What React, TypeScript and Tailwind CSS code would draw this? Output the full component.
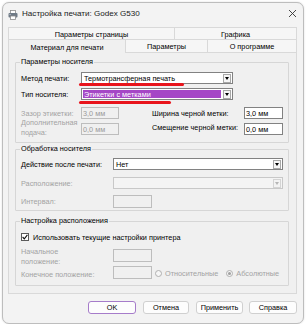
import React from "react";

const GRAY = "text-[#a3a3a3]";

function Arrow({ disabled }: { disabled?: boolean }) {
  return (
    <div className="w-[10px] flex items-center justify-center">
      <div
        className={`w-[8px] h-[9px] border flex items-center justify-center ${
          disabled ? "border-[#d4d4d4] bg-[#f3f3f3]" : "border-[#a8a8a8] bg-[#f6f6f6]"
        }`}
      >
        <div
          className={`w-0 h-0 border-l-[2.5px] border-r-[2.5px] border-t-[3px] border-l-transparent border-r-transparent ${
            disabled ? "border-t-[#b5b5b5]" : "border-t-black"
          }`}
        />
      </div>
    </div>
  );
}

function Combo({
  w,
  text,
  purple,
  disabled,
  red,
}: {
  w: string;
  text?: string;
  purple?: boolean;
  disabled?: boolean;
  red?: string;
}) {
  return (
    <div
      className={`relative h-[12px] flex items-stretch border ${w} ${
        disabled ? "border-[#c8c8c8] bg-[#f4f4f4]" : "border-[#828282] bg-white"
      }`}
    >
      <div className="flex-1 flex items-stretch p-[1px]">
        {purple ? (
          <div className="flex-1 bg-[#a547c6] text-white flex items-center pl-[1px]">{text}</div>
        ) : (
          <div className="flex-1 flex items-center pl-[1px]">{text}</div>
        )}
      </div>
      <Arrow disabled={disabled} />
      {red && <div className={`absolute left-[-3px] h-[2.5px] rounded-full bg-[#e8141c] ${red}`} />}
    </div>
  );
}

function TextBox({
  w,
  h,
  value,
  disabled,
}: {
  w: string;
  h: string;
  value?: string;
  disabled?: boolean;
}) {
  return (
    <div
      className={`${w} ${h} border flex items-center pl-[1px] ${
        disabled ? "border-[#bdbdbd] bg-[#f0f0f0] text-[#9a9a9a]" : "border-[#828282] bg-white text-black"
      }`}
    >
      {value}
    </div>
  );
}

function GroupBox({
  title,
  className,
  children,
}: {
  title: string;
  className: string;
  children: React.ReactNode;
}) {
  return (
    <div className={`relative w-[274px] border border-[#d6d6d6] rounded-[1px] ${className}`}>
      <div className="absolute left-[4px] top-[-6px] px-[1px] leading-[10px] bg-[#f0f0f0] text-black">
        {title}
      </div>
      {children}
    </div>
  );
}

function Radio({ checked }: { checked?: boolean }) {
  return (
    <div className="w-[7px] h-[7px] rounded-full border border-[#b0b0b0] bg-[#f6f6f6] flex items-center justify-center">
      {checked && <div className="w-[3px] h-[3px] rounded-full bg-[#a0a0a0]" />}
    </div>
  );
}

function Btn({ w, label, primary }: { w: string; label: string; primary?: boolean }) {
  return (
    <div
      className={`${w} h-[13px] rounded-[3px] flex items-center justify-center bg-[#fdfdfd] ${
        primary ? "border-[1.5px] border-[#a67cca]" : "border border-[#d0d0d0]"
      }`}
    >
      {label}
    </div>
  );
}

export default function App() {
  return (
    <div className="w-[307px] h-[324px] bg-white pt-[2px] pl-[2px] overflow-hidden font-['Liberation_Sans',Arial,sans-serif] text-[7.3px] leading-[9px] text-black">
      <div className="w-[302px] h-[322px] border border-[#bdbdbd] rounded-[7px] bg-[#f3f3f3] flex flex-col overflow-hidden shadow-[0_0_2px_rgba(0,0,0,0.15)]">
        {/* Title bar */}
        <div className="h-[24px] flex items-center pl-[5px] pr-[6px]">
          <svg width="10" height="10" viewBox="0 0 10 10">
            <rect x="2.5" y="0.5" width="5" height="3" fill="#ffffff" stroke="#8a8a8a" strokeWidth="0.8" />
            <rect x="0.5" y="3" width="9" height="4.5" rx="1" fill="#6f7a86" />
            <rect x="1.5" y="4" width="1.2" height="0.8" fill="#cfd8e2" />
            <rect x="2.5" y="6" width="5" height="3.5" fill="#ffffff" stroke="#8a8a8a" strokeWidth="0.8" />
          </svg>
          <span className="ml-[4px] text-[8.1px] leading-[10px] text-[#1a1a1a] -mt-[2px]">
            Настройка печати: Godex G530
          </span>
          <svg className="ml-auto -mt-[3px]" width="9" height="9" viewBox="0 0 9 9">
            <path d="M1 1 L8 8 M8 1 L1 8" stroke="#333333" strokeWidth="0.9" fill="none" />
          </svg>
        </div>

        {/* Body */}
        <div className="pl-[5px] flex flex-col">
          {/* Tabs row 1 */}
          <div className="flex h-[12px]">
            <div className="w-[166px] border-t border-l border-[#d9d9d9] bg-[#f6f6f6] flex justify-center pt-[2px]">
              Параметры страницы
            </div>
            <div className="w-[123px] border-t border-l border-r border-[#d9d9d9] bg-[#f6f6f6] flex justify-center pt-[2px]">
              Графика
            </div>
          </div>
          {/* Tabs row 2 */}
          <div className="flex h-[14px]">
            <div className="w-[117px] border-t border-l border-[#d9d9d9] bg-[#f0f0f0] flex items-center justify-center pt-[1px]">
              Материал для печати
            </div>
            <div className="w-[82px] border-t border-l border-b border-[#d9d9d9] bg-[#f6f6f6] flex items-center justify-center pt-[1px]">
              Параметры
            </div>
            <div className="w-[90px] border-t border-l border-r border-b border-[#d9d9d9] bg-[#f6f6f6] flex items-center justify-center pt-[1px]">
              О программе
            </div>
          </div>

          {/* Panel */}
          <div className="w-[289px] h-[241px] border-l border-r border-b border-[#d9d9d9] bg-[#f0f0f0] pl-[6px] pt-[9px] flex flex-col">
            <GroupBox title="Параметры носителя" className="h-[81px]">
              <div className="pt-[9px] pl-[5px] flex flex-col">
                <div className="flex items-center h-[12px]">
                  <span className="w-[60px]">Метод печати:</span>
                  <Combo w="w-[152px]" text="Термотрансферная печать" red="top-[10px] w-[105px]" />
                </div>
                <div className="mt-[4px] flex items-center h-[12px]">
                  <span className="w-[60px]">Тип носителя:</span>
                  <Combo w="w-[152px]" text="Этикетки с метками" purple red="top-[12px] w-[92px]" />
                </div>
                <div className="mt-[7px] flex items-center h-[12px]">
                  <span className={`w-[60px] ${GRAY}`}>Зазор этикетки:</span>
                  <TextBox w="w-[38px]" h="h-[12px]" value="3,0 мм" disabled />
                  <span className="ml-[33px] w-[92px]">Ширина черной метки:</span>
                  <TextBox w="w-[39px]" h="h-[12px]" value="3,0 мм" />
                </div>
                <div className="mt-[4px] flex items-center h-[12px]">
                  <span className={`w-[60px] leading-[10px] mb-[3px] ${GRAY}`}>
                    Дополнительная
                    <br />
                    подача:
                  </span>
                  <TextBox w="w-[38px]" h="h-[12px]" value="0,0 мм" disabled />
                  <span className="ml-[33px] w-[92px] mb-[4px]">Смещение черной метки:</span>
                  <TextBox w="w-[39px]" h="h-[12px]" value="0,0 мм" />
                </div>
              </div>
            </GroupBox>

            <GroupBox title="Обработка носителя" className="h-[62px] mt-[6px]">
              <div className="pt-[8px] pl-[5px] flex flex-col">
                <div className="flex items-center h-[12px]">
                  <span className="w-[92px]">Действие после печати:</span>
                  <Combo w="w-[170px]" text="Нет" />
                </div>
                <div className="mt-[7px] flex items-center h-[12px]">
                  <span className={`w-[92px] ${GRAY}`}>Расположение:</span>
                  <Combo w="w-[170px]" disabled />
                </div>
                <div className="mt-[6px] flex items-center h-[13px]">
                  <span className={`w-[92px] ${GRAY}`}>Интервал:</span>
                  <TextBox w="w-[39px]" h="h-[13px]" disabled />
                </div>
              </div>
            </GroupBox>

            <GroupBox title="Настройка расположения" className="h-[65px] mt-[10px]">
              <div className="pt-[10px] pl-[5px] flex flex-col">
                <div className="flex items-center h-[10px]">
                  <div className="w-[8px] h-[8px] border border-[#5a5a5a] bg-white flex items-center justify-center">
                    <svg width="6" height="6" viewBox="0 0 6 6">
                      <path d="M0.6 3 L2.3 4.8 L5.4 0.9" stroke="#111111" strokeWidth="1.1" fill="none" />
                    </svg>
                  </div>
                  <span className="ml-[4px]">Использовать текущие настройки принтера</span>
                </div>
                <div className="mt-[7px] flex items-start h-[13px]">
                  <span className={`w-[92px] leading-[9.5px] -mt-[2px] ${GRAY}`}>
                    Начальное
                    <br />
                    положение:
                  </span>
                  <TextBox w="w-[39px]" h="h-[13px]" disabled />
                </div>
                <div className="mt-[4px] flex items-center h-[13px]">
                  <span className={`w-[92px] mt-[3px] ${GRAY}`}>Конечное положение:</span>
                  <TextBox w="w-[39px]" h="h-[13px]" disabled />
                  <div className="ml-[3px] mt-[2px] flex items-center">
                    <Radio />
                    <span className={`ml-[3px] ${GRAY}`}>Относительные</span>
                    <div className="ml-[8px]">
                      <Radio checked />
                    </div>
                    <span className={`ml-[3px] ${GRAY}`}>Абсолютные</span>
                  </div>
                </div>
              </div>
            </GroupBox>
          </div>

          {/* Buttons */}
          <div className="mt-[7px] flex pl-[80px]">
            <Btn w="w-[48px]" label="OK" primary />
            <div className="ml-[7px]">
              <Btn w="w-[46px]" label="Отмена" />
            </div>
            <div className="ml-[7px]">
              <Btn w="w-[47px]" label="Применить" />
            </div>
            <div className="ml-[6px]">
              <Btn w="w-[48px]" label="Справка" />
            </div>
          </div>
        </div>
      </div>
    </div>
  );
}
